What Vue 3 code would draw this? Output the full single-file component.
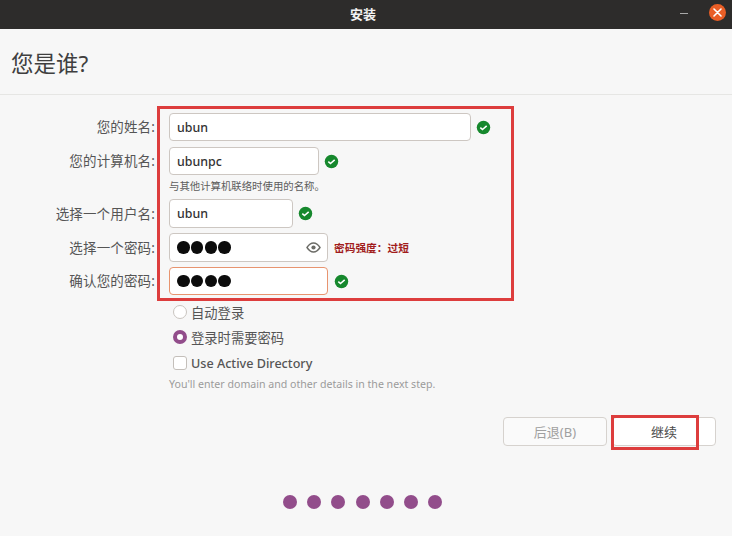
<script setup>
const dots = [1, 2, 3, 4, 5, 6, 7]
</script>

<template>
  <div class="win">
    <header class="titlebar">
      <span class="wintitle">安装</span>
      <div class="controls">
        <span class="minimize"></span>
        <span class="close">
          <svg width="9" height="9" viewBox="0 0 9 9"><path d="M1 1l7 7M8 1L1 8" stroke="#fff" stroke-width="1.6" stroke-linecap="round" fill="none"/></svg>
        </span>
      </div>
    </header>

    <div class="heading"><h1>您是谁?</h1></div>

    <main class="form">
      <div class="row">
        <label>您的姓名:</label>
        <div class="input w302">ubun</div>
        <svg class="ok" viewBox="0 0 16 16"><circle cx="8" cy="8" r="7.2" fill="#16882d"/><path d="M4.6 8.2l2.3 2 4.5-3.9" stroke="#fff" stroke-width="1.7" fill="none"/></svg>
      </div>
      <div class="row r2">
        <label>您的计算机名:</label>
        <div class="input w150">ubunpc</div>
        <svg class="ok" viewBox="0 0 16 16"><circle cx="8" cy="8" r="7.2" fill="#16882d"/><path d="M4.6 8.2l2.3 2 4.5-3.9" stroke="#fff" stroke-width="1.7" fill="none"/></svg>
      </div>
      <div class="hint">与其他计算机联络时使用的名称。</div>
      <div class="row r3">
        <label>选择一个用户名:</label>
        <div class="input w124">ubun</div>
        <svg class="ok" viewBox="0 0 16 16"><circle cx="8" cy="8" r="7.2" fill="#16882d"/><path d="M4.6 8.2l2.3 2 4.5-3.9" stroke="#fff" stroke-width="1.7" fill="none"/></svg>
      </div>
      <div class="row r4">
        <label>选择一个密码:</label>
        <div class="input w159 pw">
          <span class="bullets"><i></i><i></i><i></i><i></i></span>
          <svg class="eye" width="15" height="11" viewBox="0 0 15 11"><path d="M1 5.5C3 2.4 5 1 7.5 1S12 2.4 14 5.5C12 8.6 10 10 7.5 10S3 8.6 1 5.5z" fill="none" stroke="#6b6b66" stroke-width="1.4"/><circle cx="7.5" cy="5.5" r="2.1" fill="#6b6b66"/></svg>
        </div>
        <span class="strength">密码强度：过短</span>
      </div>
      <div class="row r5">
        <label>确认您的密码:</label>
        <div class="input w159 pw focus">
          <span class="bullets"><i></i><i></i><i></i><i></i></span>
        </div>
        <svg class="ok" viewBox="0 0 16 16"><circle cx="8" cy="8" r="7.2" fill="#16882d"/><path d="M4.6 8.2l2.3 2 4.5-3.9" stroke="#fff" stroke-width="1.7" fill="none"/></svg>
      </div>

      <div class="options">
        <div class="opt o1"><span class="radio"></span>自动登录</div>
        <div class="opt"><span class="radio on"></span>登录时需要密码</div>
        <div class="opt o3"><span class="check"></span><span class="latin">Use Active Directory</span></div>
        <div class="note">You'll enter domain and other details in the next step.</div>
      </div>
    </main>

    <div class="actions">
      <div class="btn back">后退(B)</div>
      <div class="btn next">继续</div>
    </div>

    <div class="dots"><span v-for="d in dots" :key="d"></span></div>

    <div class="mark mark-form"></div>
    <div class="mark mark-next"></div>
  </div>
</template>

<style>
body { margin: 0; }
</style>

<style scoped>
.win {
  position: relative;
  width: 732px;
  height: 536px;
  overflow: hidden;
  background: #f7f7f7;
  color: #3d3d3d;
  font-family: "Noto Sans", "Noto Sans CJK SC", sans-serif;
  font-size: 13px;
  display: flex;
  flex-direction: column;
}
.titlebar {
  height: 29px;
  flex: none;
  background: #2d2c2b;
  position: relative;
  display: flex;
  align-items: center;
  justify-content: center;
  padding: 0 6px 2px 0;
  box-sizing: border-box;
}
.wintitle { color: #f2f2f2; font-size: 13px; font-weight: 700; }
.controls {
  position: absolute;
  right: 6px;
  top: 4px;
  display: flex;
  align-items: center;
  gap: 21px;
}
.minimize { width: 8px; height: 1.5px; background: #a8a8a8; margin-top: 2px; }
.close {
  width: 17px;
  height: 17px;
  border-radius: 50%;
  background: #e95e26;
  display: flex;
  align-items: center;
  justify-content: center;
}
.heading {
  height: 66px;
  flex: none;
  box-sizing: border-box;
  border-bottom: 1px solid #e6e6e4;
  padding: 20px 0 0 11px;
}
h1 {
  margin: 0;
  font-size: 22.5px;
  line-height: 30px;
  font-weight: 400;
  color: #3f3f3f;
}
.form { padding-top: 18px; flex: none; }
.row { display: flex; align-items: center; height: 28px; }
.r2 { margin-top: 6px; }
.r3 { margin-top: 5px; height: 29px; }
.r4 { margin-top: 5px; height: 29px; }
.r5 { margin-top: 5px; }
label {
  width: 155px;
  margin-right: 14px;
  padding-bottom: 2px;
  text-align: right;
  color: #555;
  font-size: 13.5px;
  letter-spacing: 0.15px;
  flex: none;
}
.input {
  box-sizing: border-box;
  height: 100%;
  background: #fff;
  border: 1px solid #cdc7c2;
  border-radius: 4px;
  padding-left: 7px;
  display: flex;
  align-items: center;
  font-size: 12.4px;
  font-weight: 500;
  color: #333;
  flex: none;
}
.w302 { width: 302px; }
.w150 { width: 150px; }
.w124 { width: 124px; }
.w159 { width: 159px; }
.pw { justify-content: space-between; padding-right: 6px; }
.focus { border-color: #e8946f; }
.bullets { display: flex; gap: 1.3px; }
.bullets i { width: 12.5px; height: 12.5px; border-radius: 50%; background: #0c0c0c; }
.ok { width: 15px; height: 15px; margin-left: 5px; flex: none; }
.r5 .ok { margin-left: 6px; }
.eye { flex: none; }
.strength { color: #a11c1c; font-size: 10.7px; font-weight: 700; margin-left: 6px; }
.hint {
  margin: 3px 0 0 169px;
  height: 16px;
  line-height: 17px;
  font-size: 10.4px;
  color: #5d5d5d;
}
.options { padding-left: 169px; }
.opt { display: flex; align-items: center; height: 25px; padding-left: 4px; color: #555; font-size: 13.3px; }
.o1 { margin-top: 5px; }
.o3 { padding-top: 1px; box-sizing: border-box; }
.radio {
  box-sizing: border-box;
  width: 14px;
  height: 14px;
  border-radius: 50%;
  border: 1px solid #c9c4bf;
  background: #fff;
  margin-right: 4px;
  margin-top: -2px;
}
.radio.on { border: 4px solid #924d8b; }
.check {
  box-sizing: border-box;
  width: 14px;
  height: 14px;
  border-radius: 3px;
  border: 1px solid #c4bfba;
  background: #fff;
  margin-right: 4px;
}
.latin { font-size: 12.6px; font-weight: 500; }
.note {
  margin-top: 1px;
  height: 17px;
  line-height: 17px;
  font-size: 10.6px;
  color: #9b9b9b;
}
.actions {
  margin-top: 24px;
  padding-right: 16px;
  display: flex;
  justify-content: flex-end;
  gap: 5px;
}
.btn {
  box-sizing: border-box;
  width: 104px;
  height: 29px;
  border: 1px solid #d6d2ce;
  border-radius: 4px;
  background: #fafafa;
  display: flex;
  align-items: center;
  justify-content: center;
  font-size: 13px;
}
.back { color: #a0a0a0; }
.next { color: #4a4a4a; background: #fff; }
.dots {
  margin-top: 49px;
  display: flex;
  justify-content: center;
  gap: 10.2px;
  padding-right: 7px;
}
.dots span { width: 14px; height: 14px; border-radius: 50%; background: #924d8b; }
.mark { position: absolute; box-sizing: border-box; border: 3px solid #dd3d3d; }
.mark-form { left: 157px; top: 106px; width: 357px; height: 195px; }
.mark-next { left: 611px; top: 415px; width: 88px; height: 35px; }
</style>
